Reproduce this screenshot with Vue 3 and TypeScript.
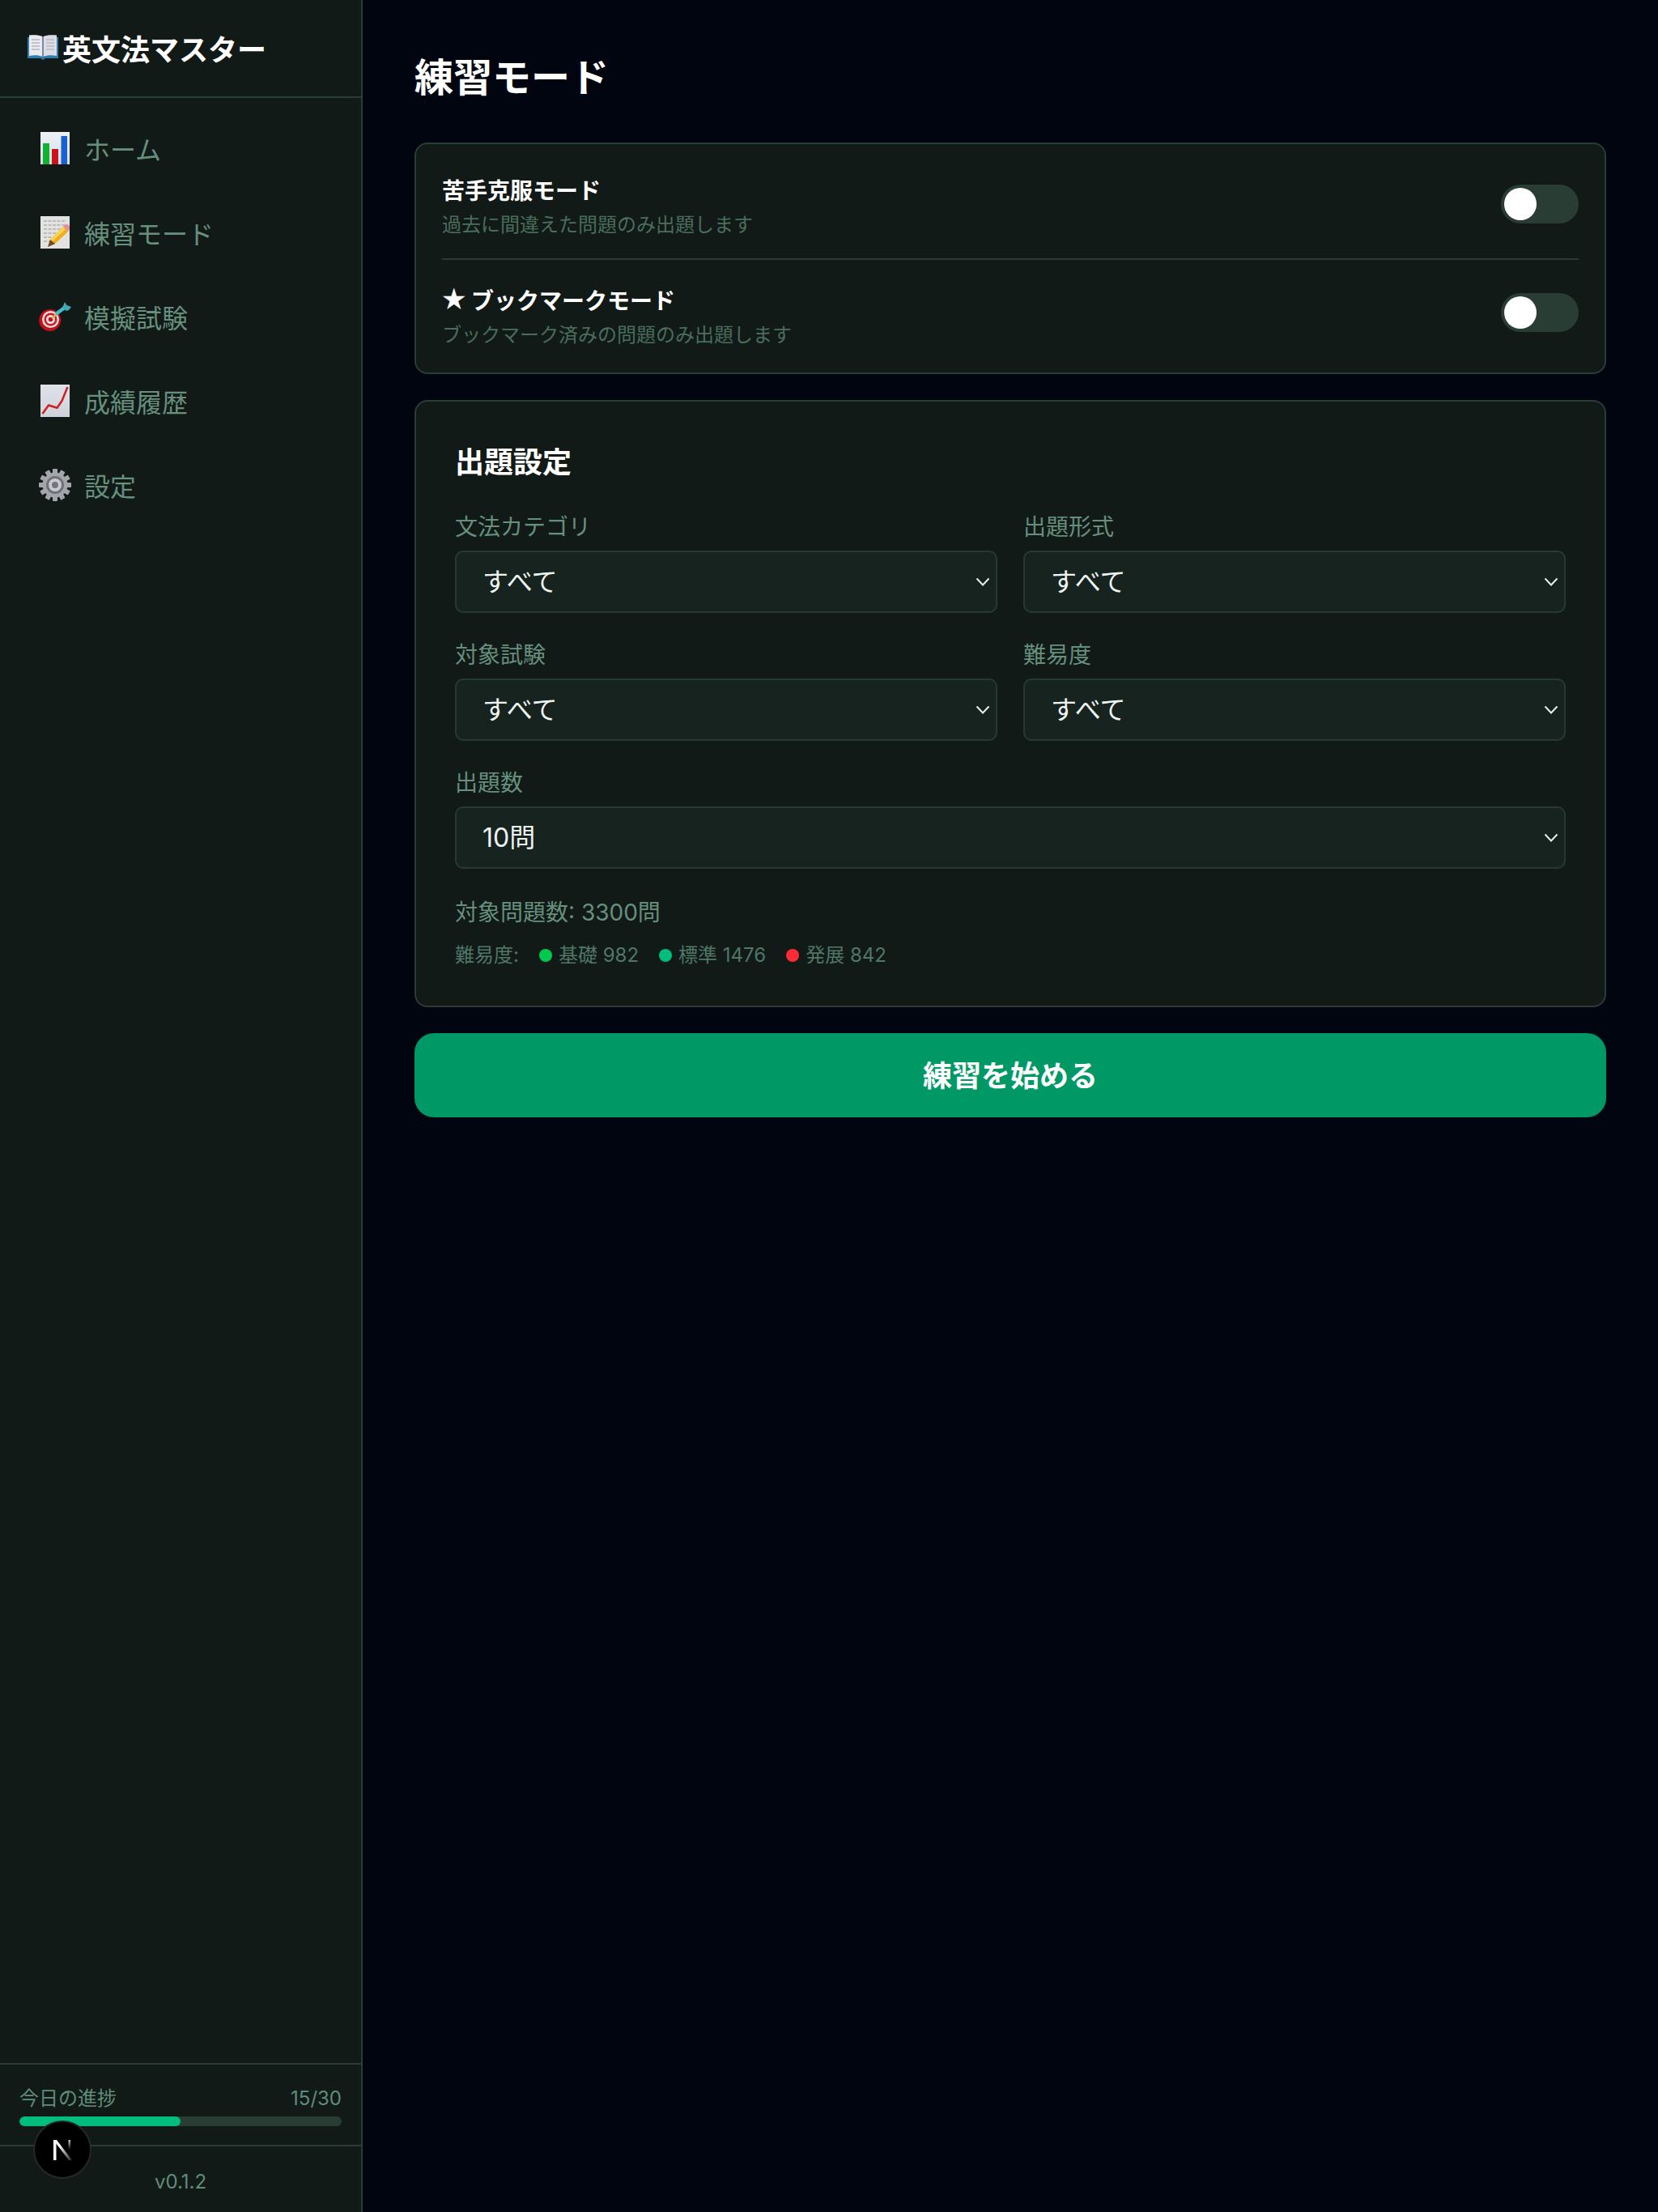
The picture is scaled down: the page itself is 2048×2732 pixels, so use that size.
<script setup lang="ts">
import { ref } from 'vue'

const nav = [
  { key: 'home', label: 'ホーム' },
  { key: 'memo', label: '練習モード' },
  { key: 'dart', label: '模擬試験' },
  { key: 'trend', label: '成績履歴' },
  { key: 'gear', label: '設定' },
]

const modes = [
  { star: false, title: '苦手克服モード', desc: '過去に間違えた問題のみ出題します' },
  { star: true, title: 'ブックマークモード', desc: 'ブックマーク済みの問題のみ出題します' },
]

const fields = [
  { label: '文法カテゴリ', value: 'すべて', wide: false },
  { label: '出題形式', value: 'すべて', wide: false },
  { label: '対象試験', value: 'すべて', wide: false },
  { label: '難易度', value: 'すべて', wide: false },
  { label: '出題数', value: '10問', wide: true },
]

const levels = [
  { name: '基礎 982', color: '#00c950' },
  { name: '標準 1476', color: '#00bc7d' },
  { name: '発展 842', color: '#fb2c36' },
]

const progress = ref(15 / 30)
const teeth = [0, 30, 60, 90, 120, 150, 180, 210, 240, 270, 300, 330]
</script>

<template>
  <div class="app">
    <aside class="sidebar">
      <header class="brand">
        <svg class="book" viewBox="0 0 38 31" width="38" height="31" aria-hidden="true">
          <path d="M0 3h38v26H22l-3 2-3-2H0z" fill="#2f7cae" />
          <path d="M2 0.500C8 0 14 0 18.500 2v25C14 25 8 25 2 26z" fill="#e9e9f0" />
          <path d="M36 0.500C30 0 24 0 19.500 2v25C24 25 30 25 36 26z" fill="#dcdce4" />
          <path d="M5 6h10M5 10h10M5 14h10M5 18h10M23 6h10M23 10h10M23 14h10M23 18h10" stroke="#c2c2cb" stroke-width="2" />
          <path d="M18.500 2h1v26h-1z" fill="#6a6a74" />
        </svg>
        <span>英文法マスター</span>
      </header>

      <nav class="nav">
        <a v-for="item in nav" :key="item.key" class="nav-item">
          <span class="nav-icon">
            <svg v-if="item.key === 'home'" viewBox="0 0 36 40" width="36" height="40">
              <defs>
                <linearGradient id="homeBg" x1="0" y1="0" x2="0" y2="1">
                  <stop offset="0" stop-color="#eef1f6" />
                  <stop offset="1" stop-color="#d6dfea" />
                </linearGradient>
              </defs>
              <rect width="36" height="40" fill="url(#homeBg)" />
              <rect x="3" y="14" width="8" height="26" fill="#10b32e" />
              <rect x="14" y="21" width="8" height="19" fill="#c8141c" />
              <rect x="25.500" y="5" width="7.500" height="35" fill="#1762d0" />
            </svg>
            <svg v-else-if="item.key === 'memo'" viewBox="0 0 36 40" width="36" height="40">
              <rect width="36" height="40" fill="#e2e2e0" />
              <path d="M4 6h28M4 11h28M4 16h24M4 21h17M4 26h12M4 31h8" stroke="#b0b0b0" stroke-width="1.500" stroke-dasharray="4 1.500" />
              <path d="M28 13l6 6-16 15-9 4 3-9z" fill="#f0ad1c" />
              <path d="M28 13l3 3-16 15-3-2z" fill="#f9d44c" />
              <path d="M28 13l2.500-2.500a2.500 2.500 0 0 1 3.500 0l2 2a2.500 2.500 0 0 1 0 3.500L34 19z" fill="#e58f93" />
              <path d="M12 29l6 5-9 4z" fill="#6b4a2a" />
            </svg>
            <svg v-else-if="item.key === 'dart'" viewBox="0 0 40 36" width="40" height="36">
              <circle cx="13.700" cy="22.500" r="13.500" fill="#c0101a" />
              <circle cx="14.500" cy="21.500" r="10.500" fill="#eedcdc" />
              <circle cx="14.500" cy="21.500" r="8" fill="#cf1a24" />
              <circle cx="14.500" cy="21.500" r="5.500" fill="#f0e2e0" />
              <circle cx="14.500" cy="21.500" r="2.800" fill="#b8141e" />
              <path d="M16 20l6-5" stroke="#e0b050" stroke-width="2.500" />
              <path d="M21 15L33 6" stroke="#45b9c6" stroke-width="4.500" />
              <path d="M29 7l3-7 2.500 4 5.500 2-2 3-3 2-3-1z" fill="#3fa9b4" />
            </svg>
            <svg v-else-if="item.key === 'trend'" viewBox="0 0 36 40" width="36" height="40">
              <defs>
                <linearGradient id="trendBg" x1="0" y1="0" x2="0" y2="1">
                  <stop offset="0" stop-color="#dfe2e8" />
                  <stop offset="1" stop-color="#cfd2d9" />
                </linearGradient>
              </defs>
              <rect width="36" height="40" fill="url(#trendBg)" />
              <path d="M2.500 36L10 25.500l10.500 3.200 6-8.700L33.500 3" fill="none" stroke="#cc1f26" stroke-width="2.500" stroke-linejoin="round" />
            </svg>
            <svg v-else viewBox="0 0 40 40" width="40" height="40">
              <g fill="#a3a5ab">
                <rect v-for="deg in teeth" :key="deg" x="17" y="0" width="6" height="7" rx="1" :transform="`rotate(${deg} 20 20)`" />
              </g>
              <circle cx="20" cy="20" r="15.500" fill="#a3a5ab" />
              <circle cx="20" cy="20" r="11" fill="#6f7178" />
              <circle cx="20" cy="20" r="8" fill="#c9cace" />
              <circle cx="20" cy="20" r="4" fill="#74767d" />
            </svg>
          </span>
          <span>{{ item.label }}</span>
        </a>
      </nav>

      <section class="progress">
        <div class="progress-head">
          <span>今日の進捗</span>
          <span>15/30</span>
        </div>
        <div class="track">
          <div class="fill" :style="{ width: progress * 100 + '%' }"></div>
        </div>
      </section>
      <footer class="version">v0.1.2</footer>

      <div class="next-badge">
        <svg viewBox="0 0 24 25" width="24" height="25" aria-hidden="true">
          <defs>
            <linearGradient id="nextDiag" x1="0" y1="0" x2="1" y2="1">
              <stop offset="0.300" stop-color="#fff" />
              <stop offset="1" stop-color="#fff" stop-opacity="0.150" />
            </linearGradient>
            <linearGradient id="nextRight" x1="0" y1="0" x2="0" y2="1">
              <stop offset="0" stop-color="#fff" stop-opacity="0.800" />
              <stop offset="0.600" stop-color="#fff" stop-opacity="0" />
            </linearGradient>
          </defs>
          <path d="M1 0h3.500v25H1z" fill="#fff" />
          <path d="M1 0h4L24 25h-4z" fill="url(#nextDiag)" />
          <path d="M19.500 0h2.500v20h-2.500z" fill="url(#nextRight)" />
        </svg>
      </div>
    </aside>

    <main class="main">
      <h1 class="title">練習モード</h1>

      <section class="card modes">
        <div v-for="mode in modes" :key="mode.title" class="mode-row">
          <div class="mode-text">
            <div class="mode-title"><span v-if="mode.star" class="star">★</span>{{ mode.title }}</div>
            <div class="mode-desc">{{ mode.desc }}</div>
          </div>
          <button class="toggle" type="button" aria-label="toggle"><span class="knob"></span></button>
        </div>
      </section>

      <section class="card settings">
        <h2 class="settings-title">出題設定</h2>
        <div class="grid">
          <label v-for="field in fields" :key="field.label" class="field" :class="{ wide: field.wide }">
            <span class="field-label">{{ field.label }}</span>
            <span class="select-wrap">
              <select class="select">
                <option>{{ field.value }}</option>
              </select>
              <svg class="chevron" viewBox="0 0 18 11" width="18" height="11" aria-hidden="true">
                <path d="M1.500 1.500L9 9.500l7.500-8" fill="none" stroke="#e6eeea" stroke-width="2" />
              </svg>
            </span>
          </label>
        </div>
        <p class="count">対象問題数: 3300問</p>
        <div class="levels">
          <span class="levels-label">難易度:</span>
          <span v-for="level in levels" :key="level.name" class="level">
            <i class="dot" :style="{ background: level.color }"></i>{{ level.name }}
          </span>
        </div>
      </section>

      <button class="start" type="button">練習を始める</button>
    </main>
  </div>
</template>

<style>
html, body { margin: 0; background: #000510; }
</style>

<style scoped>
.app {
  display: flex;
  height: 2732px;
  background: #000510;
  color: #fff;
  font-family: Inter, "Noto Sans CJK JP", "Noto Sans", sans-serif;
}
.sidebar {
  position: relative;
  width: 448px;
  box-sizing: border-box;
  flex: none;
  display: flex;
  flex-direction: column;
  background: #111a17;
  border-right: 2px solid #2a3d35;
}
.brand {
  height: 121px;
  box-sizing: border-box;
  border-bottom: 2px solid #2a3d35;
  padding: 0 0 2px 34px;
  display: flex;
  align-items: center;
  gap: 5px;
  font-size: 36px;
  font-weight: 700;
  color: #fff;
}
.nav {
  flex: 1;
  padding-top: 10px;
}
.nav-item {
  height: 104px;
  padding-left: 48px;
  display: flex;
  align-items: center;
  gap: 16px;
  font-size: 32px;
  color: #668f7d;
}
.nav-icon {
  width: 40px;
  height: 40px;
  display: flex;
  align-items: center;
  justify-content: center;
}
.progress {
  height: 103px;
  box-sizing: border-box;
  border-top: 2px solid #2a3d35;
  border-bottom: 2px solid #2a3d35;
  padding: 24px 24px 0;
}
.progress-head {
  display: flex;
  justify-content: space-between;
  height: 36px;
  line-height: 36px;
  font-size: 24px;
  color: #5f8d79;
}
.track {
  margin-top: 4px;
  height: 12px;
  border-radius: 6px;
  background: #2a3d35;
  overflow: hidden;
}
.fill {
  height: 100%;
  border-radius: 6px;
  background: #00bc7d;
}
.version {
  height: 81px;
  box-sizing: border-box;
  padding-top: 26px;
  line-height: 36px;
  text-align: center;
  font-size: 24px;
  color: #5f8d79;
}
.next-badge {
  position: absolute;
  left: 41px;
  top: 2619px;
  width: 72px;
  height: 72px;
  box-sizing: border-box;
  border-radius: 50%;
  background: #000;
  border: 2px solid #25282a;
  display: flex;
  align-items: center;
  justify-content: center;
}
.main {
  flex: 1;
  min-width: 0;
  padding: 64px;
}
.title {
  margin: 0 0 48px;
  font-size: 48px;
  line-height: 64px;
  font-weight: 700;
  color: #fff;
}
.card {
  box-sizing: border-box;
  background: #111a17;
  border: 2px solid #2a3d35;
  border-radius: 16px;
}
.modes {
  height: 286px;
  padding: 0 32px;
  margin-bottom: 32px;
}
.mode-row {
  height: 141px;
  box-sizing: border-box;
  padding-top: 7px;
  display: flex;
  align-items: center;
  justify-content: space-between;
}
.mode-text {
  margin-top: 5px;
}
.mode-row + .mode-row {
  padding-top: 0;
  padding-bottom: 9px;
  height: 141px;
  border-top: 2px solid #2a3d35;
}
.mode-row + .mode-row .mode-text {
  margin-top: 8px;
}
.mode-title {
  font-size: 28px;
  line-height: 42px;
  font-weight: 700;
  color: #fff;
}
.star {
  display: inline-block;
  width: 36px;
  font-size: 32px;
  line-height: 32px;
  margin-left: -2px;
  margin-right: 2px;
}
.mode-desc {
  margin-top: 5px;
  font-size: 24px;
  line-height: 32px;
  color: #4a6d5d;
}
.toggle {
  width: 96px;
  height: 48px;
  padding: 4px;
  border: 0;
  border-radius: 24px;
  background: #2a3d35;
  display: flex;
  flex: none;
}
.knob {
  width: 40px;
  height: 40px;
  border-radius: 50%;
  background: #fff;
}
.settings {
  padding: 48px 48px 44px;
  margin-bottom: 32px;
}
.settings-title {
  margin: 0 0 32px;
  font-size: 36px;
  line-height: 54px;
  font-weight: 700;
  color: #fff;
}
.grid {
  display: grid;
  grid-template-columns: 1fr 1fr;
  gap: 31px 32px;
}
.field {
  display: flex;
  flex-direction: column;
  gap: 8px;
  min-width: 0;
}
.field.wide {
  grid-column: 1 / -1;
}
.field-label {
  font-size: 28px;
  line-height: 42px;
  color: #668f7d;
}
.select-wrap {
  position: relative;
  display: block;
}
.select {
  display: block;
  width: 100%;
  height: 77px;
  box-sizing: border-box;
  padding: 0 48px 0 32px;
  appearance: none;
  background: #17231f;
  border: 2px solid #263a32;
  border-radius: 10px;
  color: #eef4f1;
  font: inherit;
  font-size: 32px;
  outline: none;
}
.chevron {
  position: absolute;
  right: 9px;
  top: 33px;
  pointer-events: none;
}
.count {
  margin: 33px 0 0;
  font-size: 28px;
  line-height: 42px;
  color: #668f7d;
}
.levels {
  margin-top: 14px;
  display: flex;
  align-items: center;
  gap: 25px;
  font-size: 24px;
  line-height: 36px;
  color: #4f7666;
}
.level {
  display: flex;
  align-items: center;
  gap: 8px;
}
.dot {
  width: 16px;
  height: 16px;
  border-radius: 50%;
}
.start {
  display: block;
  width: 100%;
  height: 104px;
  border: 0;
  border-radius: 24px;
  background: #009966;
  color: #fff;
  font: inherit;
  font-size: 36px;
  font-weight: 700;
  padding-bottom: 5px;
}
</style>
